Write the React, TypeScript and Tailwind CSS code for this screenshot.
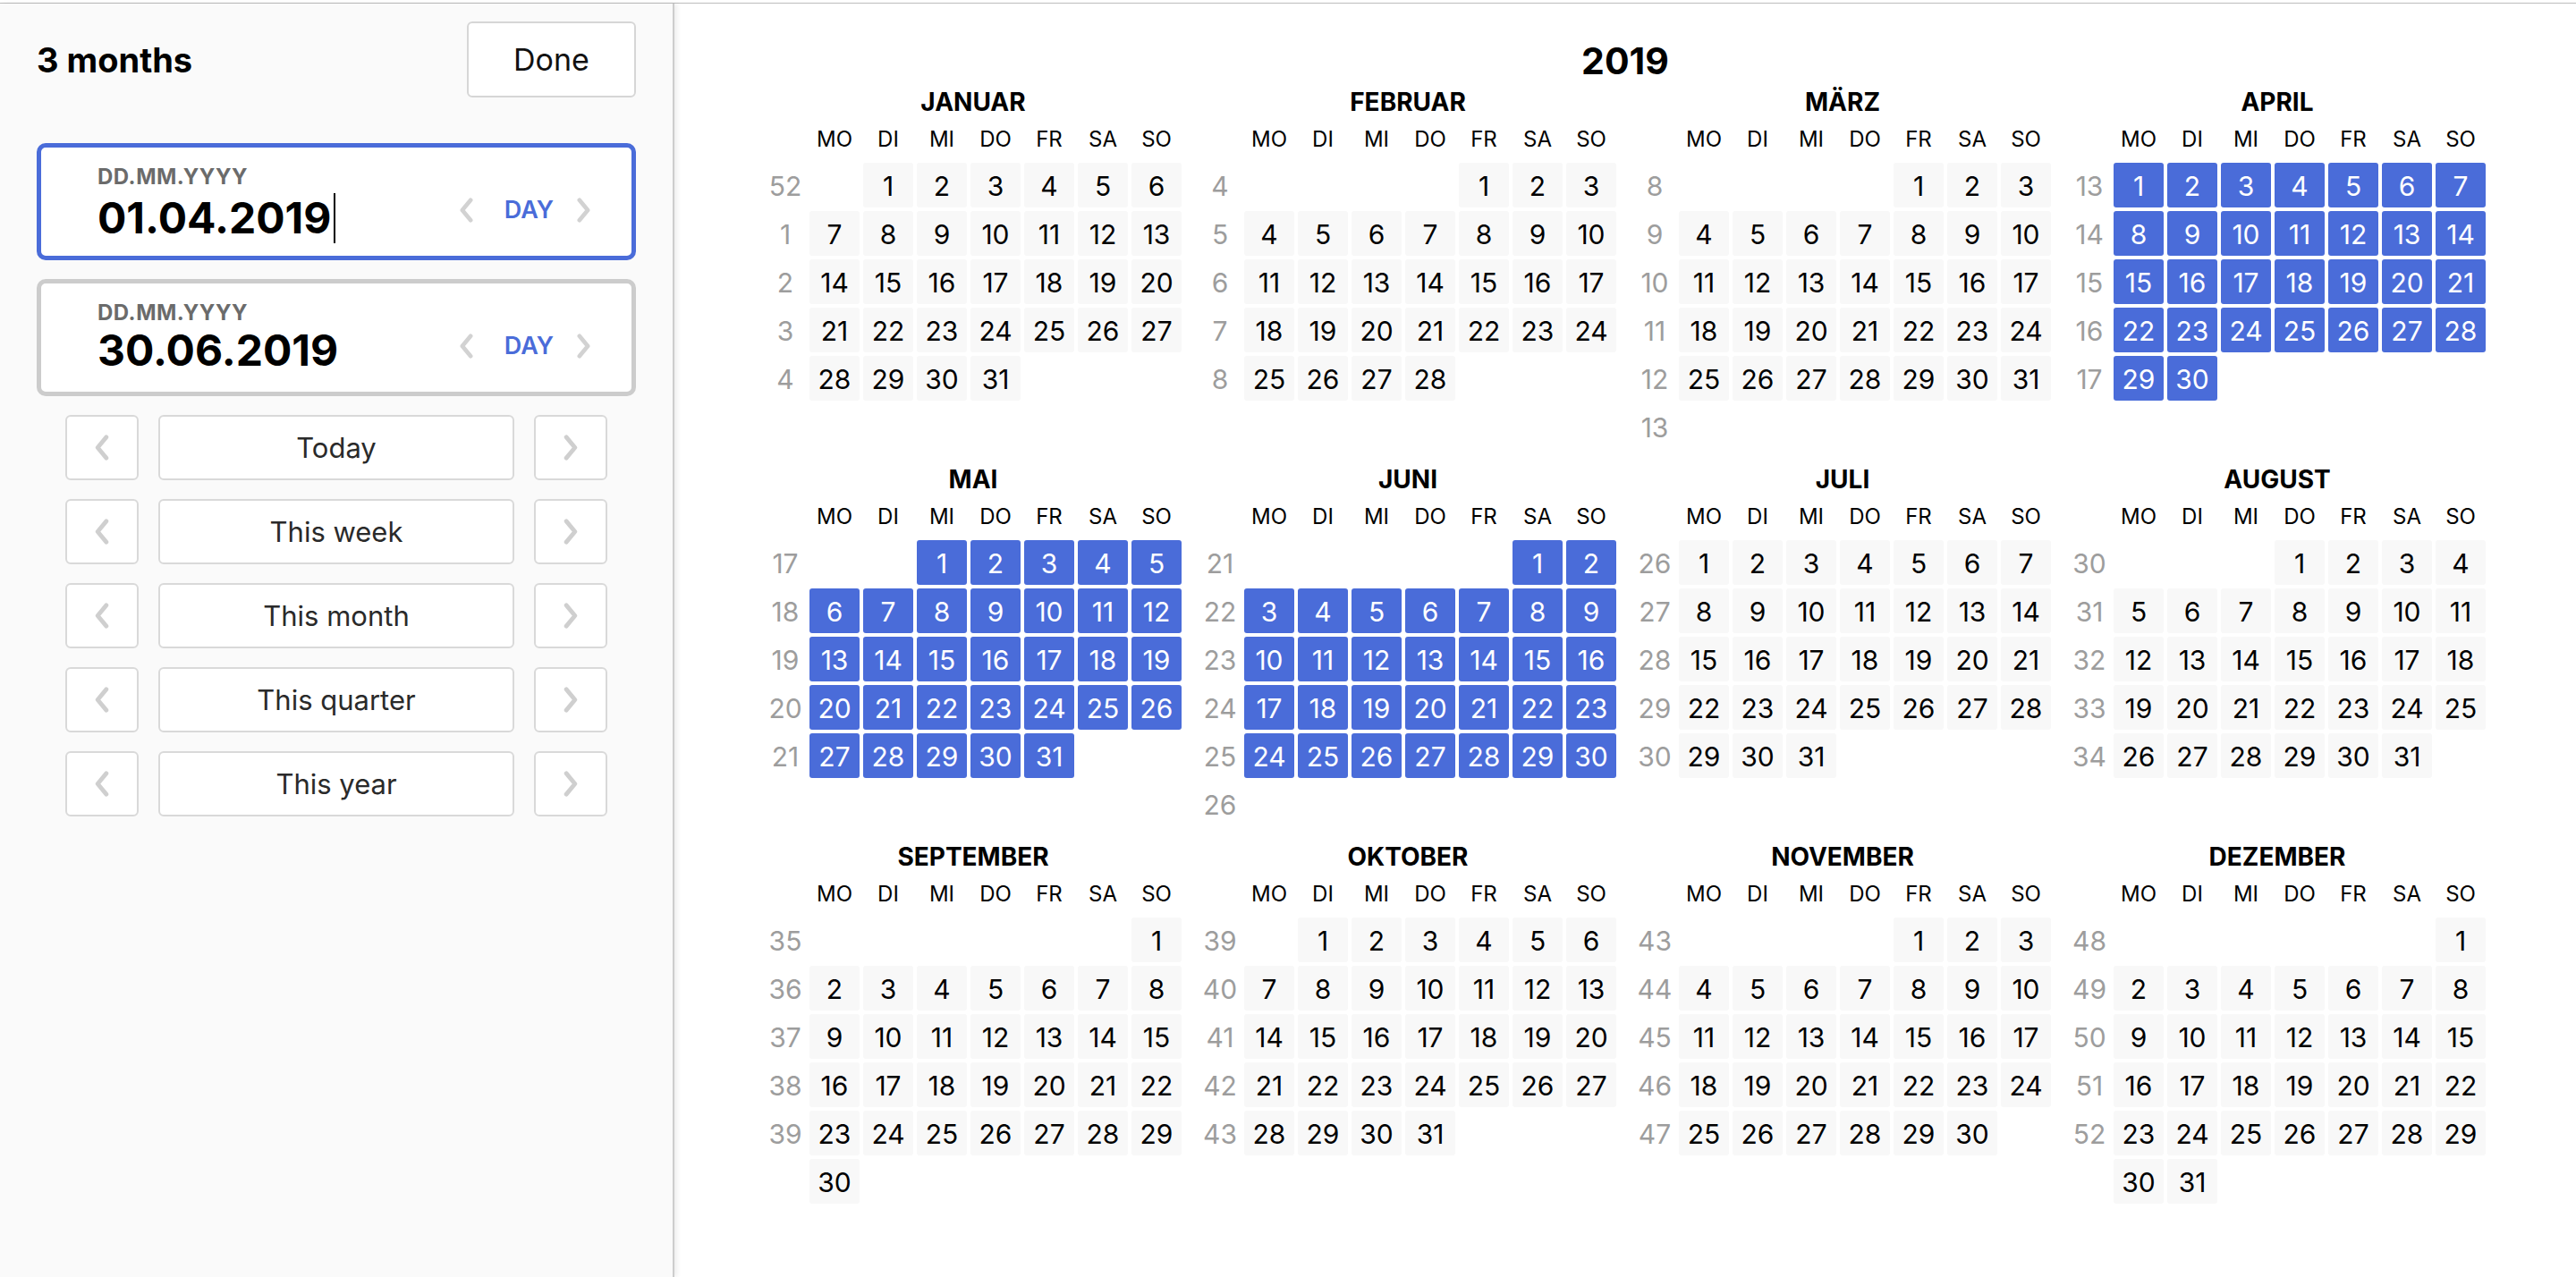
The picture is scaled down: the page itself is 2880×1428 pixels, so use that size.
import React from 'react';

const MONTHS = ['JANUAR', 'FEBRUAR', 'MÄRZ', 'APRIL', 'MAI', 'JUNI', 'JULI', 'AUGUST', 'SEPTEMBER', 'OKTOBER', 'NOVEMBER', 'DEZEMBER'];
const WEEKDAYS = ['MO', 'DI', 'MI', 'DO', 'FR', 'SA', 'SO'];
// week labels as the picker prints them (one per sunday-based week)
const WEEKS = [
    [52, 1, 2, 3, 4],
    [4, 5, 6, 7, 8],
    [8, 9, 10, 11, 12, 13],
    [13, 14, 15, 16, 17],
    [17, 18, 19, 20, 21],
    [21, 22, 23, 24, 25, 26],
    [26, 27, 28, 29, 30],
    [30, 31, 32, 33, 34],
    [35, 36, 37, 38, 39],
    [39, 40, 41, 42, 43],
    [43, 44, 45, 46, 47],
    [48, 49, 50, 51, 52],
];
const YEAR = 2019;
const FONT = { fontFamily: 'Inter, "Noto Sans", sans-serif' };

const Chevron = ({ dir, className = '' }: { dir: 'left' | 'right'; className?: string }) => (
    <svg viewBox="0 0 20 30" className={className} fill="none" stroke="currentColor" strokeWidth={5} strokeLinecap="round" strokeLinejoin="round">
        {dir === 'left' ? <polyline points="15,3 5,15 15,27" /> : <polyline points="5,3 15,15 5,27" />}
    </svg>
);

const DateBox = ({ value, active, caret }: { value: string; active?: boolean; caret?: boolean }) => (
    <div className={`h-[131px] rounded-[10px] bg-white border-[5px] flex items-start pl-[63px] pr-[44px] ${active ? 'border-[#4a6cd9]' : 'border-[#cccccc]'}`}>
        <div className="flex-1 pt-[21px]">
            <div className="text-[24px] leading-[24px] font-bold text-[#6b6b6b] tracking-[0.5px]">DD.MM.YYYY</div>
            <div className="mt-[6px] flex items-center text-[48px] leading-[48px] font-bold text-black">
                {value}
                {caret && <span className="ml-[3px] w-[2px] h-[56px] bg-black" />}
            </div>
        </div>
        <div className="flex items-center mt-[56px] text-[#d2d2d2]">
            <Chevron dir="left" className="w-[19px] h-[28px]" />
            <span className="ml-[33px] text-[27px] leading-[28px] font-semibold text-[#4a6cd9]">DAY</span>
            <Chevron dir="right" className="ml-[24px] w-[19px] h-[28px]" />
        </div>
    </div>
);

const RangeRow = ({ label }: { label: string }) => (
    <div className="flex gap-[22px] w-[606px] mx-auto">
        <button className="w-[82px] h-[73px] bg-white border-2 border-[#d9d9d9] rounded-[6px] flex items-center justify-center text-[#cfcfcf]">
            <Chevron dir="left" className="w-[20px] h-[29px]" />
        </button>
        <button className="flex-1 h-[73px] pt-[2px] bg-white border-2 border-[#d9d9d9] rounded-[6px] text-[31px] text-[#2a2a2a]">
            {label}
        </button>
        <button className="w-[82px] h-[73px] bg-white border-2 border-[#d9d9d9] rounded-[6px] flex items-center justify-center text-[#cfcfcf]">
            <Chevron dir="right" className="w-[20px] h-[29px]" />
        </button>
    </div>
);

const Month = ({ index }: { index: number }) => {
    const offset = (new Date(YEAR, index, 1).getDay() + 6) % 7;
    const days = new Date(YEAR, index + 1, 0).getDate();
    const selected = index >= 3 && index <= 5;
    return (
        <div className="w-[466px]">
            <div className="h-[40px] leading-[40px] text-center text-[28px] font-bold text-black">{MONTHS[index]}</div>
            <div className="grid grid-cols-[46px_repeat(7,56px)] grid-rows-[44px_repeat(6,50px)] gap-[4px]">
                <div />
                {WEEKDAYS.map(w => (
                    <div key={w} className="leading-[44px] text-center text-[24px] text-black">{w}</div>
                ))}
                {WEEKS[index].map((wk, r) => (
                    <div key={'w' + r} className="col-start-1 flex items-center justify-center pt-[3px] text-[30px] text-[#9d9d9d]" style={{ gridRow: r + 2 }}>{wk}</div>
                ))}
                {Array.from({ length: days }, (_, i) => {
                    const pos = offset + i;
                    const isToday = index === 4 && i + 1 === 14;
                    return (
                        <div
                            key={i}
                            className={`rounded-[3px] flex items-center justify-center pt-[3px] text-[30px] ${selected ? 'bg-[#4a6cd9] text-white' : 'bg-[#f8f8f8] text-black'} ${isToday ? 'text-[#c6f3c0]' : ''}`}
                            style={{ gridRow: Math.floor(pos / 7) + 2, gridColumn: (pos % 7) + 2 }}
                        >
                            {i + 1}
                        </div>
                    );
                })}
            </div>
        </div>
    );
};

export default function App() {
    return (
        <div className="h-screen flex flex-col bg-white pt-[3px]" style={FONT}>
            <div className="flex-1 min-h-0 flex border-t border-[#bdbdbd]">
                {/* sidebar */}
                <div className="w-[754px] shrink-0 bg-[#fafafa] border-r-2 border-[#cdcdcd] shadow-[3px_0_5px_rgba(0,0,0,0.07)] z-10 px-[41px]">
                    <div className="flex items-center justify-between pt-[20px]">
                        <div className="pt-[2px] text-[38px] font-bold text-black">3 months</div>
                        <button className="w-[189px] h-[85px] bg-white border-2 border-[#d6d6d6] rounded-[6px] text-[34px] text-[#111]">Done</button>
                    </div>
                    <div className="mt-[51px] flex flex-col gap-[21px]">
                        <DateBox value="01.04.2019" active caret />
                        <DateBox value="30.06.2019" />
                    </div>
                    <div className="mt-[21px] flex flex-col gap-[21px]">
                        {['Today', 'This week', 'This month', 'This quarter', 'This year'].map(l => (
                            <RangeRow key={l} label={l} />
                        ))}
                    </div>
                </div>

                {/* year view */}
                <div className="flex-1 min-w-0 flex flex-col items-center pt-[39px]">
                    <div className="h-[50px] leading-[50px] text-[41px] font-bold text-black">{YEAR}</div>
                    <div className="mt-[1px] grid grid-cols-[repeat(4,466px)] gap-x-[20px] gap-y-[14px]">
                        {MONTHS.map((_, i) => <Month key={i} index={i} />)}
                    </div>
                </div>
            </div>
        </div>
    );
}
